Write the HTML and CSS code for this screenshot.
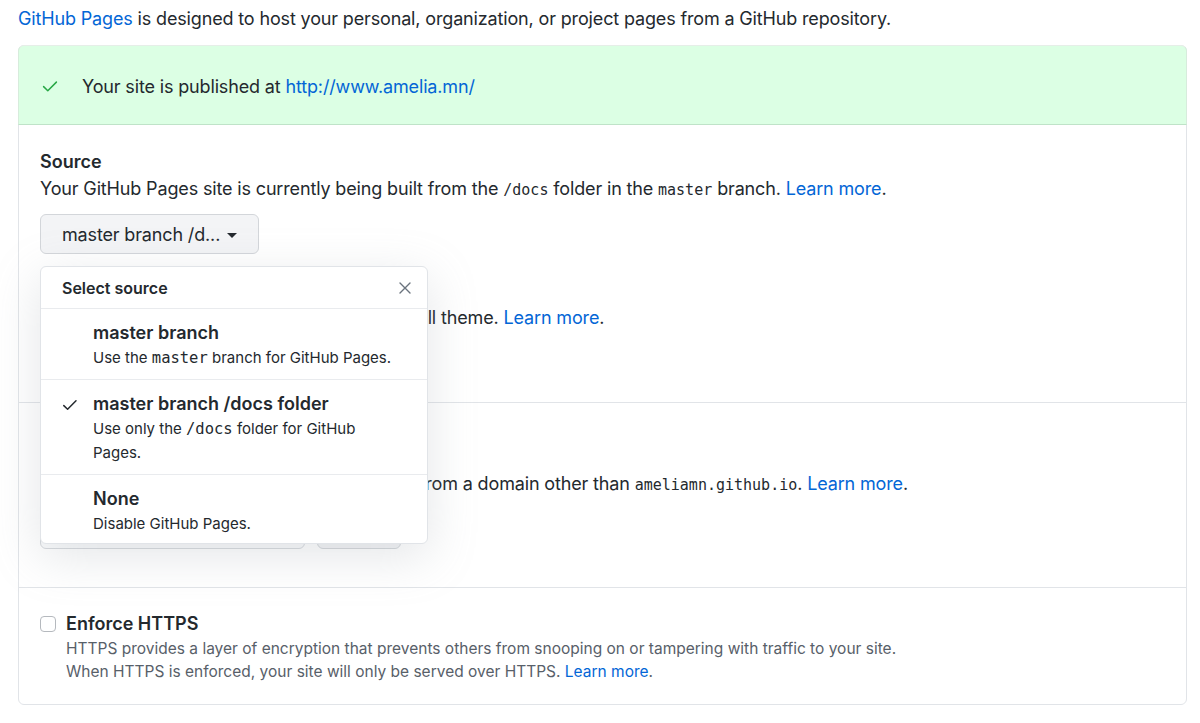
FILE: index.html
```html
<!DOCTYPE html>
<html>
<head>
<meta charset="utf-8">
<link rel="stylesheet" href="styles.css">
</head>
<body>
<div class="page">
  <p class="intro"><a href="#">GitHub Pages</a> is designed to host your personal, organization, or project pages from a GitHub repository.</p>
  <div class="box">
    <div class="flash">
      <svg class="flash-icon" width="16" height="16" viewBox="0 0 16 16"><path d="M1.6 8.6l4.2 4.1 8.6-8.6" fill="none" stroke="#28a745" stroke-width="1.5" stroke-linecap="round" stroke-linejoin="round"/></svg>
      <span>Your site is published at <a href="#">http://www.amelia.mn/</a></span>
    </div>
    <div class="row row-source">
      <h4 class="heading">Source</h4>
      <p class="text">Your GitHub Pages site is currently being built from the <code>/docs</code> folder in the <code>master</code> branch. <a href="#">Learn more</a>.</p>
      <div class="select-wrap">
        <button class="btn">master branch /d... <span class="caret"></span></button>
        <div class="menu">
          <div class="menu-header">
            <span>Select source</span>
            <svg width="16" height="16" viewBox="0 0 16 16"><path d="M3 3l10 10M13 3L3 13" stroke="#6a737d" stroke-width="1.4" stroke-linecap="round"/></svg>
          </div>
          <div class="menu-item">
            <span class="menu-check"></span>
            <div class="menu-body">
              <div class="menu-title">master branch</div>
              <div class="menu-desc">Use the <code>master</code> branch for GitHub Pages.</div>
            </div>
          </div>
          <div class="menu-item">
            <span class="menu-check"><svg width="16" height="16" viewBox="0 0 16 16"><path d="M1.8 8.6l3.8 3.6 8.4-8.4" fill="none" stroke="#24292e" stroke-width="1.5" stroke-linecap="round" stroke-linejoin="round"/></svg></span>
            <div class="menu-body">
              <div class="menu-title">master branch /docs folder</div>
              <div class="menu-desc">Use only the <code>/docs</code> folder for GitHub Pages.</div>
            </div>
          </div>
          <div class="menu-item">
            <span class="menu-check"></span>
            <div class="menu-body">
              <div class="menu-title">None</div>
              <div class="menu-desc">Disable GitHub Pages.</div>
            </div>
          </div>
        </div>
      </div>
      <h4 class="heading theme-heading">Theme chooser</h4>
      <p class="text">Select a theme to publish your site with a Jekyll theme. <a href="#">Learn more</a>.</p>
      <button class="btn btn-theme">Choose a theme</button>
    </div>
    <div class="row row-domain">
      <h4 class="heading">Custom domain</h4>
      <p class="text">Custom domains allow you to serve your site from a domain other than <code>ameliamn.github.io</code>. <a href="#">Learn more</a>.</p>
      <div class="domain-form">
        <input class="input" type="text" value="www.amelia.mn">
        <button class="btn btn-save">Save</button>
      </div>
    </div>
    <div class="row row-https">
      <span class="checkbox"></span>
      <div class="https-body">
        <div class="https-title">Enforce HTTPS</div>
        <p class="https-desc">HTTPS provides a layer of encryption that prevents others from snooping on or tampering with traffic to your site.<br>When HTTPS is enforced, your site will only be served over HTTPS. <a href="#">Learn more</a>.</p>
      </div>
    </div>
  </div>
</div>
</body>
</html>
```

FILE: styles.css
```css
* { box-sizing: border-box; }
body {
  margin: 0;
  background: #fff;
  color: #24292e;
  font-family: "Inter", "Liberation Sans", sans-serif;
  font-size: 18px;
  letter-spacing: -0.15px;
}
a { color: #0366d6; text-decoration: none; }
code {
  font-family: "DejaVu Sans Mono", "Liberation Mono", monospace;
  font-size: 15px;
  letter-spacing: 0;
}
.page {
  padding: 5px 13px 0 18px;
}
.intro {
  margin: 0;
  line-height: 27px;
  height: 40px;
}
.box {
  border: 1px solid #e1e4e8;
  border-radius: 6px;
}
.flash {
  height: 80px;
  margin: -1px -1px 0 -1px;
  background: #dcffe4;
  border: 1px solid #d7ecdc;
  border-top-color: #e6eee8;
  border-bottom-color: #bfe3c8;
  border-radius: 6px 6px 0 0;
  display: flex;
  align-items: center;
  padding: 2px 0 0 23px;
  gap: 24px;
}
.row {
  padding: 0 21px;
  border-top: 1px solid #e1e4e8;
}
.flash + .row { border-top: 0; }
.heading {
  margin: 0;
  font-size: 18px;
  font-weight: 600;
  line-height: 24px;
  letter-spacing: 0;
}
.text {
  margin: 3px 0 0;
  line-height: 27px;
}
.row-source {
  padding-top: 25px;
  height: 277px;
}
.row-source .text { margin-top: 1px; }
.select-wrap {
  position: relative;
  margin-top: 10px;
}
.btn {
  font-family: inherit;
  font-size: 18px;
  letter-spacing: -0.15px;
  color: #24292e;
  background: #f3f4f6;
  border: 1px solid #d3d6da;
  border-radius: 6px;
  height: 40px;
  padding: 0 21px;
  display: inline-flex;
  align-items: center;
  gap: 7px;
}
.caret {
  display: inline-block;
  width: 0; height: 0;
  border-left: 5px solid transparent;
  border-right: 5px solid transparent;
  border-top: 5px solid #24292e;
  margin-top: 2px;
}
.menu {
  position: absolute;
  left: 0;
  top: 52px;
  width: 388px;
  background: #fff;
  border: 1px solid #e1e4e8;
  border-radius: 6px;
  box-shadow: 0 12px 48px rgba(149, 157, 165, 0.25);
  z-index: 5;
}
.menu-header {
  height: 42px;
  display: flex;
  align-items: center;
  justify-content: space-between;
  padding: 0 14px 0 21px;
  font-size: 16px;
  font-weight: 600;
  letter-spacing: 0;
  border-bottom: 1px solid #e9ebee;
}
.menu-item {
  display: flex;
  padding: 12px 10px 9px 21px;
  border-bottom: 1px solid #e9ebee;
}
.menu-item:last-child { border-bottom: 0; padding-bottom: 7px; }
.menu-check {
  width: 31px;
  flex: none;
  padding-top: 4px;
}
.menu-body {
  width: 300px;
}
.menu-title {
  font-size: 18px;
  font-weight: 600;
  line-height: 24px;
  letter-spacing: 0;
}
.menu-desc {
  margin-top: 1px;
  font-size: 15px;
  line-height: 24px;
  letter-spacing: 0;
  color: #24292e;
}
.menu-desc code { font-size: 15.5px; }
.theme-heading { margin-top: 25px; }
.btn-theme { margin-top: 11px; }
.row-domain {
  padding-top: 40px;
  height: 185px;
}
.domain-form {
  margin-top: 10px;
  display: flex;
  gap: 12px;
}
.input {
  width: 265px;
  height: 40px;
  border: 1px solid #d6d9dd;
  border-radius: 6px;
  background: #fafbfc;
  font-family: inherit;
  font-size: 18px;
  padding: 0 12px;
}
.btn-save { width: 84px; justify-content: center; }
.row-https {
  display: flex;
  gap: 10px;
  padding-top: 24px;
  padding-bottom: 21px;
}
.checkbox {
  width: 16px;
  height: 16px;
  border: 1px solid #b5b9be;
  border-radius: 4px;
  margin-top: 4px;
  flex: none;
}
.https-title {
  font-size: 18px;
  font-weight: 600;
  line-height: 24px;
  letter-spacing: 0;
}
.https-desc {
  margin: 1px 0 0;
  font-size: 15.5px;
  line-height: 23px;
  letter-spacing: 0;
  color: #586069;
}
```
